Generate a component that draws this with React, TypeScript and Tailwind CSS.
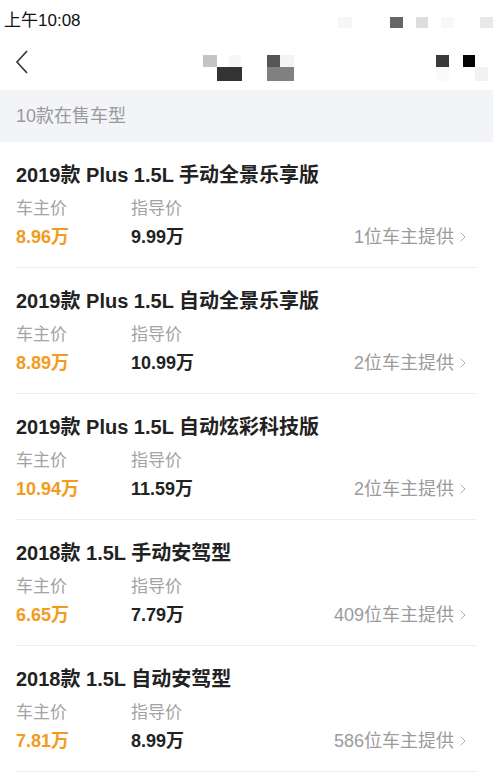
import { ChevronRight } from "lucide-react";

const models = [
  { name: "2019款 Plus 1.5L 手动全景乐享版", owner: "8.96万", guide: "9.99万", count: "1位车主提供" },
  { name: "2019款 Plus 1.5L 自动全景乐享版", owner: "8.89万", guide: "10.99万", count: "2位车主提供" },
  { name: "2019款 Plus 1.5L 自动炫彩科技版", owner: "10.94万", guide: "11.59万", count: "2位车主提供" },
  { name: "2018款 1.5L 手动安驾型", owner: "6.65万", guide: "7.79万", count: "409位车主提供" },
  { name: "2018款 1.5L 自动安驾型", owner: "7.81万", guide: "8.99万", count: "586位车主提供" },
];

// 打码后的块（标题和右侧图标被马赛克处理）
function Mosaic({ blocks, w, h }: { blocks: [number, number, number, number, string][]; w: number; h: number }) {
  return (
    <svg width={w} height={h} viewBox={`0 0 ${w} ${h}`}>
      {blocks.map(([x, y, bw, bh, c], i) => (
        <rect key={i} x={x} y={y} width={bw} height={bh} fill={c} />
      ))}
    </svg>
  );
}

export default function App() {
  return (
    <div
      className="w-[493px] h-[773px] overflow-hidden bg-white text-[#222]"
      style={{ fontFamily: '"Liberation Sans", "Noto Sans CJK SC", sans-serif' }}
    >
      {/* 状态栏 */}
      <div className="h-[38px] flex items-center justify-between pl-1">
        <span className="text-[17px] text-[#111] leading-none mt-[2px]">上午10:08</span>
        <Mosaic
          w={160}
          h={38}
          blocks={[
            [5, 17, 14, 11, "#f6f6f6"],
            [57, 17, 13, 11, "#666666"],
            [83, 17, 12, 11, "#dddddd"],
            [108, 17, 13, 11, "#f8f8f8"],
            [147, 17, 13, 11, "#e8e8e8"],
          ]}
        />
      </div>

      {/* 导航栏 */}
      <div className="h-[52px] relative flex items-center">
        <svg width="14" height="24" viewBox="0 0 14 24" className="ml-[15px] mb-[4px]">
          <path d="M12 1 L2 12 L12 23" fill="none" stroke="#333" strokeWidth="1.6" />
        </svg>
        <div className="absolute left-[203px] top-[17px]">
          <Mosaic
            w={92}
            h={26}
            blocks={[
              [0, 0, 14, 12, "#c4c4c4"],
              [14, 12, 25, 14, "#333333"],
              [26, 0, 12, 12, "#f7f7f7"],
              [64, 0, 13, 12, "#555555"],
              [64, 12, 27, 14, "#808080"],
              [77, 0, 14, 12, "#f3f3f3"],
            ]}
          />
        </div>
        <div className="absolute left-[436px] top-[17px]">
          <Mosaic
            w={53}
            h={26}
            blocks={[
              [0, 0, 13, 12, "#3a3a3a"],
              [27, 0, 12, 12, "#050505"],
              [0, 12, 13, 14, "#fafafa"],
              [39, 12, 13, 14, "#f2f2f2"],
            ]}
          />
        </div>
      </div>

      {/* 分组标题 */}
      <div className="h-[52px] bg-[#f2f4f7] flex items-center px-4">
        <span className="text-[18px] text-[#9a9a9a]">10款在售车型</span>
      </div>

      {/* 车型列表 */}
      <div className="mx-4">
        {models.map((m) => (
          <div key={m.name} className="pt-[19px] pb-[18px] border-b border-[#eeeeee]">
            <div className="text-[20px] leading-[28px] font-bold text-[#222]">{m.name}</div>
            <div className="flex mt-[8px] text-[17px] leading-[24px] text-[#a3a3a3]">
              <span className="w-[115px]">车主价</span>
              <span>指导价</span>
            </div>
            <div className="flex items-center mt-[4px] leading-[24px]">
              <span className="w-[115px] text-[18px] font-bold text-[#f29b1d]">{m.owner}</span>
              <span className="text-[18px] font-bold text-[#222]">{m.guide}</span>
              <span className="ml-auto flex items-center text-[18px] text-[#9b9b9b] pr-[6px]">
                {m.count}
                <ChevronRight size={16} strokeWidth={1.4} className="ml-[1px] text-[#aaa]" />
              </span>
            </div>
          </div>
        ))}
      </div>
    </div>
  );
}
